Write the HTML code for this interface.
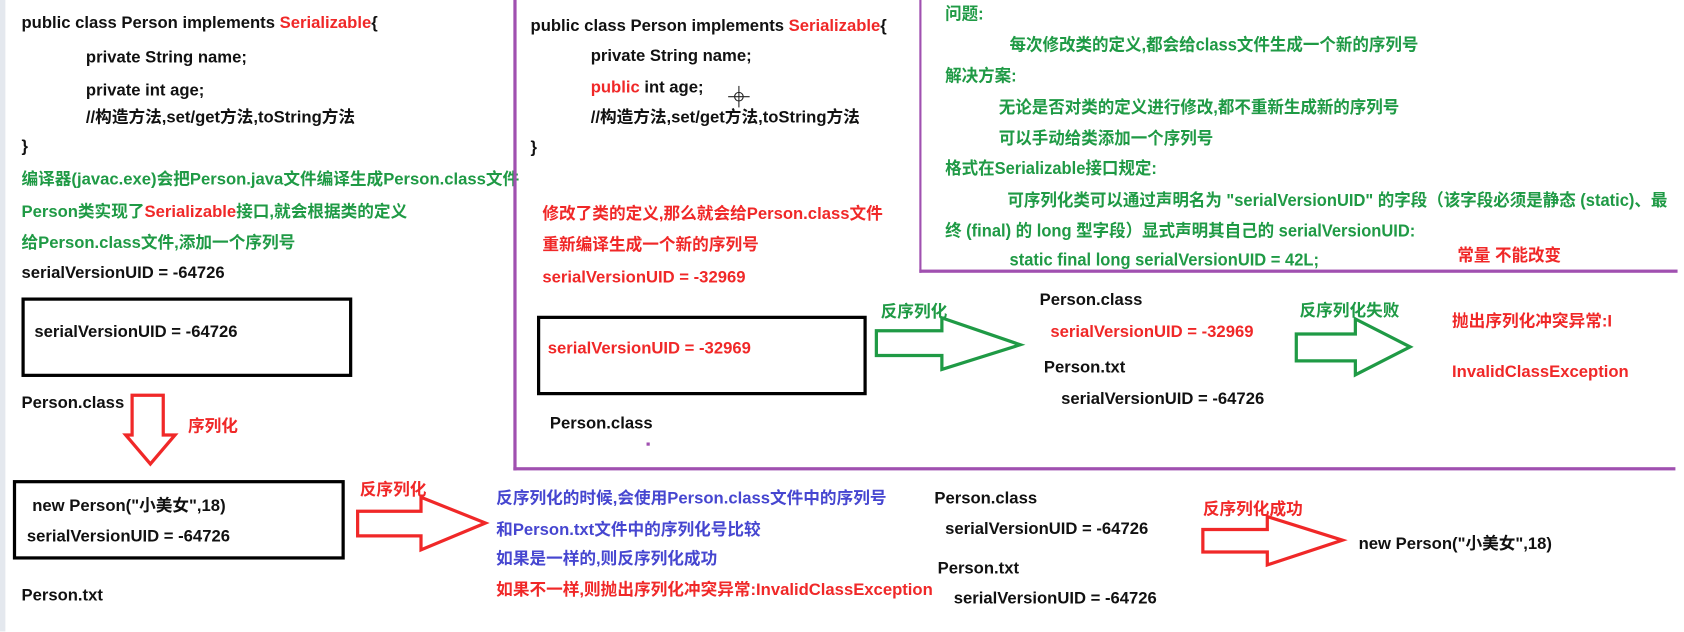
<!DOCTYPE html>
<html><head><meta charset="utf-8"><style>
html,body{margin:0;padding:0;width:1684px;height:631px;overflow:hidden;background:#fff}
#s{position:absolute;left:0;top:0;width:1568px;height:588px;transform:scale(1.07398);transform-origin:0 0;font-family:"Liberation Sans","Noto Sans CJK SC",sans-serif;font-weight:bold;font-size:15.5px;color:#111}
.t{position:absolute;white-space:nowrap;line-height:20px;height:20px}
.r{color:#f02828}.g{color:#1f9a45}.b{color:#4646d0}
.box{position:absolute;border:3px solid #000;box-sizing:border-box}
.n{display:inline-block;font-size:16px;transform:scaleX(0.96);transform-origin:0 50%}
.p{position:absolute;background:#a050b0}
</style></head><body><div id="s">
<div style="position:absolute;left:0;top:0;width:5px;height:588px;background:#e4e8ee"></div>

<div class="t" style="left:20px;top:12px">public class Person implements <span class="r">Serializable</span>{</div>
<div class="t" style="left:80px;top:44px">private String name;</div>
<div class="t" style="left:80px;top:75px">private int age;</div>
<div class="t" style="left:80px;top:100px">//构造方法,set/get方法,toString方法</div>
<div class="t" style="left:20px;top:127px">}</div>
<div class="t g" style="left:20px;top:158px">编译器(javac.exe)会把Person.java文件编译生成Person.class文件</div>
<div class="t g" style="left:20px;top:188px">Person类实现了<span class="r">Serializable</span>接口,就会根据类的定义</div>
<div class="t g" style="left:20px;top:217px">给Person.class文件,添加一个序列号</div>
<div class="t" style="left:20px;top:245px">serialVersionUID = -64726</div>
<div class="box" style="left:20px;top:277px;width:308px;height:74px"></div>
<div class="t" style="left:32px;top:300px">serialVersionUID = -64726</div>
<div class="t" style="left:20px;top:366px">Person.class</div>
<svg style="position:absolute;left:0;top:0" width="1568" height="588">
<polygon points="123,368 152,368 152,405 163,405 140,432 117,405 123,405" fill="none" stroke="#f02828" stroke-width="3"/>
<polygon points="333,476 392,476 392,463 452,487 392,512 392,499 333,499" fill="none" stroke="#f02828" stroke-width="3"/>
<polygon points="816,308 877,308 877,296 950,321 877,344 877,331 816,331" fill="none" stroke="#1f9a45" stroke-width="3"/>
<polygon points="1207,311 1262,311 1262,297 1313,323 1262,349 1262,336 1207,336" fill="none" stroke="#1f9a45" stroke-width="3"/>
<polygon points="1120,493 1180,493 1180,481 1250,503 1180,526 1180,514 1120,514" fill="none" stroke="#f02828" stroke-width="3"/>
<g stroke="#222" stroke-width="1" fill="none"><line x1="678" y1="90" x2="698" y2="90"/><line x1="688" y1="80" x2="688" y2="100"/><circle cx="688" cy="90" r="4"/></g>
</svg>
<div class="t r" style="left:175px;top:388px">序列化</div>
<div class="box" style="left:12px;top:447px;width:309px;height:74px"></div>
<div class="t" style="left:30px;top:462px">new Person("小美女",18)</div>
<div class="t" style="left:25px;top:490px">serialVersionUID = -64726</div>
<div class="t" style="left:20px;top:545px">Person.txt</div>
<div class="t r" style="left:335px;top:447px">反序列化</div>
<div class="t b" style="left:462px;top:455px">反序列化的时候,会使用Person.class文件中的序列号</div>
<div class="t b" style="left:462px;top:484px">和Person.txt文件中的序列化号比较</div>
<div class="t b" style="left:462px;top:511px">如果是一样的,则反序列化成功</div>
<div class="t r" style="left:462px;top:540px">如果不一样,则抛出序列化冲突异常:InvalidClassException</div>

<div class="p" style="left:478px;top:0;width:3px;height:438px"></div>
<div class="p" style="left:478px;top:435px;width:1082px;height:3px"></div>
<div class="t" style="left:494px;top:15px">public class Person implements <span class="r">Serializable</span>{</div>
<div class="t" style="left:550px;top:43px">private String name;</div>
<div class="t" style="left:550px;top:72px"><span class="r">public</span> int age;</div>
<div class="t" style="left:550px;top:100px">//构造方法,set/get方法,toString方法</div>
<div class="t" style="left:494px;top:128px">}</div>
<div class="t r" style="left:505px;top:190px">修改了类的定义,那么就会给Person.class文件</div>
<div class="t r" style="left:505px;top:219px">重新编译生成一个新的序列号</div>
<div class="t r" style="left:505px;top:249px">serialVersionUID = -32969</div>
<div class="box" style="left:500px;top:294px;width:307px;height:74px"></div>
<div class="t r" style="left:510px;top:315px">serialVersionUID = -32969</div>
<div class="t" style="left:512px;top:385px">Person.class</div>
<div style="position:absolute;left:602px;top:412px;width:3px;height:3px;background:#a050b0"></div>
<div class="t g" style="left:820px;top:281px">反序列化</div>
<div class="t" style="left:968px;top:270px">Person.class</div>
<div class="t r" style="left:978px;top:300px">serialVersionUID = -32969</div>
<div class="t" style="left:972px;top:333px">Person.txt</div>
<div class="t" style="left:988px;top:362px">serialVersionUID = -64726</div>
<div class="t g" style="left:1210px;top:280px">反序列化失败</div>
<div class="t r" style="left:1352px;top:290px">抛出序列化冲突异常:I</div>
<div class="t r" style="left:1352px;top:337px">InvalidClassException</div>

<div class="p" style="left:856px;top:0;width:2px;height:254px"></div>
<div class="p" style="left:856px;top:251px;width:706px;height:3px"></div>
<div class="t g" style="left:880px;top:4px"><span class="n">问题:</span></div>
<div class="t g" style="left:940px;top:33px"><span class="n">每次修改类的定义,都会给class文件生成一个新的序列号</span></div>
<div class="t g" style="left:880px;top:62px"><span class="n">解决方案:</span></div>
<div class="t g" style="left:930px;top:91px"><span class="n">无论是否对类的定义进行修改,都不重新生成新的序列号</span></div>
<div class="t g" style="left:930px;top:120px"><span class="n">可以手动给类添加一个序列号</span></div>
<div class="t g" style="left:880px;top:148px"><span class="n">格式在Serializable接口规定:</span></div>
<div class="t g" style="left:938px;top:178px"><span class="n">可序列化类可以通过声明名为 "serialVersionUID" 的字段（该字段必须是静态 (static)、最</span></div>
<div class="t g" style="left:880px;top:206px"><span class="n">终 (final) 的 long 型字段）显式声明其自己的 serialVersionUID:</span></div>
<div class="t g" style="left:940px;top:233px"><span class="n">static final long serialVersionUID = 42L;</span></div>
<div class="t r" style="left:1357px;top:229px"><span class="n">常量 不能改变</span></div>

<div class="t" style="left:870px;top:455px">Person.class</div>
<div class="t" style="left:880px;top:483px">serialVersionUID = -64726</div>
<div class="t" style="left:873px;top:520px">Person.txt</div>
<div class="t" style="left:888px;top:548px">serialVersionUID = -64726</div>
<div class="t r" style="left:1120px;top:465px">反序列化成功</div>
<div class="t" style="left:1265px;top:497px">new Person("小美女",18)</div>
</div></body></html>
